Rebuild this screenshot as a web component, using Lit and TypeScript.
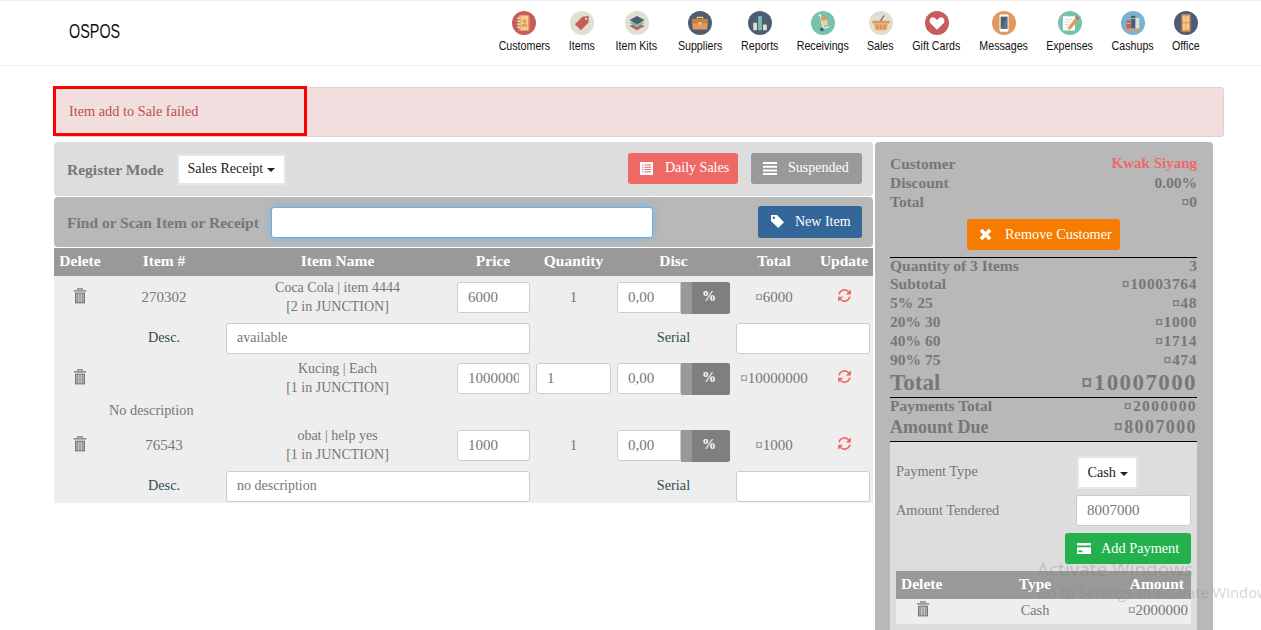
import { LitElement, css, html, svg } from "lit";
import { customElement } from "lit/decorators.js";

const navIcons: Record<string, unknown> = {
  customers: svg`<circle cx="32" cy="32" r="32" fill="#c75c5c"/><rect x="17" y="12" width="30" height="40" rx="3" fill="#e0995e"/><rect x="23" y="12" width="20" height="40" fill="#f5cf87"/><circle cx="33" cy="27" r="5" fill="#e0995e"/><path d="M25 42c0-7 4-9 8-9s8 2 8 9z" fill="#e0995e"/><path d="M13 19h8M13 27h8M13 35h8M13 43h8" stroke="#fff" stroke-width="2.5"/>`,
  items: svg`<circle cx="32" cy="32" r="32" fill="#e0e0d1"/><path d="M13 35 33 15l17-2-1 18-20 20z" fill="#c75c5c"/><circle cx="43" cy="21" r="3" fill="#e0e0d1"/>`,
  kits: svg`<circle cx="32" cy="32" r="32" fill="#e0e0d1"/><path d="M12 40 32 30l20 10-20 11z" fill="#c75c5c"/><path d="M12 32 32 22l20 10-20 11z" fill="#76c2af"/><path d="M12 24 32 13l20 11-20 11z" fill="#4f5d73"/>`,
  suppliers: svg`<circle cx="32" cy="32" r="32" fill="#4f5d73"/><path d="M25 22v-5h14v5" fill="none" stroke="#f5cf87" stroke-width="3"/><rect x="12" y="21" width="40" height="28" rx="3" fill="#e0995e"/><rect x="12" y="21" width="40" height="12" fill="#c9803f"/><rect x="28" y="30" width="8" height="6" fill="#f5cf87"/>`,
  reports: svg`<circle cx="32" cy="32" r="32" fill="#4f5d73"/><rect x="14" y="31" width="10" height="20" rx="1" fill="#e0e0d1"/><rect x="27" y="13" width="10" height="38" rx="1" fill="#76c2af"/><rect x="40" y="36" width="10" height="15" rx="1" fill="#e0e0d1"/>`,
  receivings: svg`<circle cx="32" cy="32" r="32" fill="#76c2af"/><path d="M20 11h5l8 35" fill="none" stroke="#fff" stroke-width="3"/><rect x="30" y="25" width="14" height="14" fill="#f5cf87" transform="rotate(-14 37 32)"/><rect x="27" y="13" width="12" height="12" fill="#e0995e" transform="rotate(-14 33 19)"/><path d="M33 46l16-4" stroke="#fff" stroke-width="3"/><circle cx="29" cy="49" r="5" fill="#4f5d73"/>`,
  sales: svg`<circle cx="32" cy="32" r="32" fill="#e0e0d1"/><path d="M30 28 40 12" stroke="#4f5d73" stroke-width="3.5"/><rect x="9" y="26" width="46" height="7" rx="1" fill="#e0995e"/><path d="M13 33h38l-4 18H17z" fill="#e8a86f"/><path d="M22 37v10M32 37v10M42 37v10" stroke="#c9803f" stroke-width="3"/>`,
  gift: svg`<circle cx="32" cy="32" r="32" fill="#c75c5c"/><path d="M32 50 15 33c-8-9 3-22 12-14l5 5 5-5c9-8 20 5 12 14z" fill="#fff"/>`,
  messages: svg`<circle cx="32" cy="32" r="32" fill="#e0995e"/><rect x="20" y="9" width="24" height="46" rx="3" fill="#fff"/><rect x="23" y="15" width="18" height="32" fill="#4f5d73"/><path d="M23 47 41 15v32z" fill="#5f6f87"/>`,
  expenses: svg`<circle cx="32" cy="32" r="32" fill="#76c2af"/><rect x="13" y="14" width="32" height="38" fill="#fff"/><path d="M18 22h22M18 29h16M18 36h10M18 43h10" stroke="#c5c5b5" stroke-width="2"/><path d="M28 42 47 17l7 6-19 24-9 3z" fill="#e0995e"/><path d="M47 17l3-4 7 6-3 4z" fill="#c75c5c"/>`,
  cashups: svg`<circle cx="32" cy="32" r="32" fill="#77b3d4"/><rect x="15" y="25" width="11" height="22" fill="#c75c5c"/><rect x="27" y="13" width="11" height="34" fill="#4f5d73"/><rect x="39" y="19" width="10" height="28" fill="#e0e0d1"/><path d="M15 33h11M27 20h11" stroke="#f5cf87" stroke-width="2"/><rect x="9" y="47" width="46" height="5" fill="#e0995e"/>`,
  office: svg`<circle cx="32" cy="32" r="32" fill="#4f5d73"/><rect x="20" y="9" width="24" height="46" fill="#e0995e"/><rect x="24" y="14" width="7" height="15" fill="#f5cf87"/><rect x="33" y="14" width="7" height="15" fill="#f5cf87"/><rect x="24" y="33" width="7" height="17" fill="#f5cf87"/><rect x="33" y="33" width="7" height="17" fill="#f5cf87"/>`,
};

const navItems = [
  { label: "Customers", icon: "customers", width: 50 },
  { label: "Items", icon: "items", width: 26 },
  { label: "Item Kits", icon: "kits", width: 43 },
  { label: "Suppliers", icon: "suppliers", width: 44 },
  { label: "Reports", icon: "reports", width: 36 },
  { label: "Receivings", icon: "receivings", width: 50 },
  { label: "Sales", icon: "sales", width: 25 },
  { label: "Gift Cards", icon: "gift", width: 47 },
  { label: "Messages", icon: "messages", width: 47 },
  { label: "Expenses", icon: "expenses", width: 45 },
  { label: "Cashups", icon: "cashups", width: 41 },
  { label: "Office", icon: "office", width: 26 },
];

const trash = html`<svg class="trash" viewBox="0 0 14 16" width="14" height="16">
  <path d="M4.8 1.8V.8h4.4v1M.8 2.8h12.4" stroke="currentColor" stroke-width="1.3" fill="none"/>
  <path d="M2 4.6h10V15.4H2z" fill="currentColor"/>
  <path d="M3.9 5.6v8.8M5.6 5.6v8.8M7 5.6v8.8M8.4 5.6v8.8M10.1 5.6v8.8" stroke="#eee" stroke-width=".7"/>
</svg>`;

const refresh = html`<svg viewBox="0 0 16 16" width="15" height="15">
  <path d="M2.2 6.8A5.9 5.9 0 0 1 12.7 4.4M13.8 9.2A5.9 5.9 0 0 1 3.3 11.6" fill="none" stroke="#ee6966" stroke-width="1.7"/>
  <path d="M14.8 1.4v5.4H9.4zM1.2 14.6V9.2h5.4z" fill="#ee6966"/>
</svg>`;

const listIcon = html`<svg viewBox="0 0 13 13" width="13" height="13">
  <path d="M0 0h13v13H0z" fill="#fff"/>
  <path d="M2 3h1.4M4.4 3H11M2 5.3h1.4M4.4 5.3H11M2 7.6h1.4M4.4 7.6H11M2 9.9h1.4M4.4 9.9H11" stroke="#ee6966" stroke-width="1"/>
</svg>`;

const barsIcon = html`<svg viewBox="0 0 14 13" width="14" height="13">
  <path d="M0 1h14M0 4.7h14M0 8.4h14M0 12h14" stroke="#fff" stroke-width="2"/>
</svg>`;

const tagIcon = html`<svg viewBox="0 0 15 15" width="15" height="15">
  <path fill-rule="evenodd" d="M1 1h6l7 7.2L8.2 14 1 7zM3.8 2.6a1.2 1.2 0 1 0 .01 0z" fill="#fff"/>
</svg>`;

const crossIcon = html`<svg viewBox="0 0 12 12" width="13" height="13">
  <path d="M1.8 1.8l8.4 8.4M10.2 1.8l-8.4 8.4" stroke="#fff" stroke-width="3.4"/>
</svg>`;

const cardIcon = html`<svg viewBox="0 0 14 11" width="14" height="11">
  <path d="M0 0h14v2.6H0zM0 4.2h14V11H0z" fill="#fff"/>
  <path d="M1.4 7.4h4v1.8h-4z" fill="#22b14c"/>
</svg>`;

interface SaleRow {
  number: string;
  name: string;
  stock: string;
  price: string;
  quantity: string;
  quantityEditable: boolean;
  total: string;
  description: string | null;
}

const rows: SaleRow[] = [
  { number: "270302", name: "Coca Cola | item 4444", stock: "[2 in JUNCTION]", price: "6000", quantity: "1", quantityEditable: false, total: "¤6000", description: "available" },
  { number: "", name: "Kucing | Each", stock: "[1 in JUNCTION]", price: "10000000", quantity: "1", quantityEditable: true, total: "¤10000000", description: null },
  { number: "76543", name: "obat | help yes", stock: "[1 in JUNCTION]", price: "1000", quantity: "1", quantityEditable: false, total: "¤1000", description: "no description" },
];

const taxes = [
  ["Subtotal", "¤10003764"],
  ["5% 25", "¤48"],
  ["20% 30", "¤1000"],
  ["40% 60", "¤1714"],
  ["90% 75", "¤474"],
];

@customElement("app-root")
export class AppRoot extends LitElement {
  renderRow(row: SaleRow) {
    return html`
      <div class="row">
        <div class="icon-cell">${trash}</div>
        <div class="num">${row.number}</div>
        <div class="name">${row.name}<br />${row.stock}</div>
        <input class="field" .value=${row.price} />
        <div class="num">
          ${row.quantityEditable
            ? html`<input class="field qty" .value=${row.quantity} />`
            : row.quantity}
        </div>
        <div class="disc">
          <input class="field" value="0,00" />
          <span class="toggle"><b>%</b></span>
        </div>
        <div class="num">${row.total}</div>
        <div class="icon-cell">${refresh}</div>
      </div>
      ${row.description === null
        ? html`<div class="row no-desc"><span>No description</span></div>`
        : html`<div class="row desc">
            <div></div>
            <div class="dark">Desc.</div>
            <input class="field wide" .value=${row.description} />
            <div class="dark serial">Serial</div>
            <input class="field serial-input" />
          </div>`}
    `;
  }

  render() {
    return html`
      <header>
        <div class="brand">OSPOS</div>
        <nav>
          ${navItems.map(
            (item) => html`<a style="width:${item.width}px">
              <svg viewBox="0 0 64 64" width="24" height="24">${navIcons[item.icon]}</svg>
              <span>${item.label}</span>
            </a>`
          )}
        </nav>
      </header>

      <div class="alert">
        <span>Item add to Sale failed</span>
        <div class="highlight"></div>
      </div>

      <main>
        <section class="register">
          <div class="bar mode">
            <label>Register Mode</label>
            <button class="select mode-select">Sales Receipt <i class="caret"></i></button>
            <div class="actions">
              <button class="btn daily">${listIcon}<span>Daily Sales</span></button>
              <button class="btn suspended">${barsIcon}<span>Suspended</span></button>
            </div>
          </div>
          <div class="bar find">
            <label>Find or Scan Item or Receipt</label>
            <input class="search" />
            <button class="btn new-item">${tagIcon}<span>New Item</span></button>
          </div>
          <div class="row thead">
            <div>Delete</div>
            <div>Item #</div>
            <div>Item Name</div>
            <div>Price</div>
            <div>Quantity</div>
            <div>Disc</div>
            <div>Total</div>
            <div>Update</div>
          </div>
          <div class="tbody">${rows.map((row) => this.renderRow(row))}</div>
        </section>

        <aside>
          <div class="line h19"><span>Customer</span><span class="customer">Kwak Siyang</span></div>
          <div class="line h19"><span>Discount</span><span>0.00%</span></div>
          <div class="line h19"><span>Total</span><span>¤0</span></div>
          <button class="btn remove">${crossIcon}<span>Remove Customer</span></button>
          <hr class="first" />
          <div class="line h17"><span>Quantity of 3 Items</span><span>3</span></div>
          ${taxes.map(
            ([name, value]) => html`<div class="line h19"><span>${name}</span><span class="value">${value}</span></div>`
          )}
          <div class="line grand"><span>Total</span><span class="value">¤10007000</span></div>
          <hr />
          <div class="line h18"><span>Payments Total</span><span class="value wide-value">¤2000000</span></div>
          <div class="line due"><span>Amount Due</span><span class="value wide-value">¤8007000</span></div>
          <hr />
          <div class="payment">
            <div class="pay-row type">
              <span>Payment Type</span>
              <button class="select cash">Cash <i class="caret"></i></button>
            </div>
            <div class="pay-row">
              <span>Amount Tendered</span>
              <input class="field tendered" value="8007000" />
            </div>
            <button class="btn add">${cardIcon}<span>Add Payment</span></button>
            <div class="pay-table pay-head">
              <div class="left">Delete</div>
              <div>Type</div>
              <div class="right">Amount</div>
            </div>
            <div class="pay-table pay-body">
              <div class="trash-cell">${trash}</div>
              <div>Cash</div>
              <div class="right num">¤2000000</div>
            </div>
          </div>
        </aside>
      </main>

      <div class="watermark">
        <div class="wm-title">Activate Windows</div>
        <div class="wm-sub">Go to Settings to activate Windows.</div>
      </div>
    `;
  }

  static styles = css`
    :host {
      display: block;
      position: relative;
      height: 630px;
      overflow: hidden;
      background: #fff;
      font-family: "Liberation Serif", serif;
      font-size: 14.3px;
      color: #777;
    }
    * {
      box-sizing: border-box;
    }
    button,
    input {
      font: inherit;
      margin: 0;
    }
    header {
      height: 66px;
      display: flex;
      align-items: flex-start;
      justify-content: space-between;
      padding: 0 62px 0 69px;
      border-top: 1px solid #eee;
      border-bottom: 1px solid #eee;
    }
    .brand {
      margin-top: 19px;
      font-family: "Liberation Sans", sans-serif;
      font-size: 20px;
      line-height: 22px;
      color: #111;
      transform: scaleX(0.72);
      transform-origin: left center;
    }
    nav {
      display: flex;
      gap: 20px;
      padding-top: 10px;
    }
    nav a {
      display: flex;
      flex-direction: column;
      align-items: center;
      color: #111;
      font-family: "Liberation Sans", sans-serif;
      font-size: 13px;
      line-height: 14px;
      white-space: nowrap;
    }
    nav a span {
      display: block;
      transform: scaleX(0.82);
    }
    nav svg {
      flex: none;
      margin-bottom: 4px;
    }
    .alert {
      position: relative;
      width: 1170px;
      height: 50px;
      margin: 21px 0 5px 54px;
      padding: 0 0 2px 14px;
      display: flex;
      align-items: center;
      border: 1px solid #ebccd1;
      border-radius: 3px;
      background: #f2dede;
      color: #b9504e;
    }
    .highlight {
      position: absolute;
      left: -2px;
      top: -2px;
      width: 254px;
      height: 50px;
      border: 3px solid #f00;
    }
    main {
      display: flex;
      align-items: flex-start;
      gap: 2px;
      margin-left: 54px;
    }
    .register {
      width: 819px;
    }
    .bar {
      display: flex;
      align-items: center;
      padding: 0 11px 0 13px;
      border-radius: 4px;
      margin-bottom: 1px;
    }
    .bar label {
      font-weight: bold;
      font-size: 15.5px;
      color: #777;
      padding-top: 2px;
    }
    .mode {
      height: 54px;
      background: #ddd;
    }
    .find {
      height: 50px;
      background: #b8b8b8;
    }
    .select {
      height: 31px;
      background: #fff;
      border: 2px solid #dce8f2;
      color: #222;
      cursor: pointer;
      padding: 0;
    }
    .mode-select {
      width: 109px;
      margin-left: 13px;
      font-size: 14px;
    }
    .caret {
      display: inline-block;
      border-top: 4px solid #222;
      border-left: 4px solid transparent;
      border-right: 4px solid transparent;
      vertical-align: middle;
    }
    .actions {
      display: flex;
      gap: 13px;
      margin: -1px 0 0 auto;
    }
    .btn {
      display: flex;
      align-items: center;
      height: 31px;
      border: 0;
      border-radius: 3px;
      color: #fff;
      padding: 0 0 1px 12px;
      white-space: nowrap;
      font-size: 14px;
    }
    .daily {
      width: 110px;
      background: #ee6966;
    }
    .daily span {
      margin-left: 12px;
    }
    .suspended {
      width: 111px;
      background: #999;
    }
    .suspended span {
      margin-left: 11px;
    }
    .search {
      width: 382px;
      height: 31px;
      margin-left: 12px;
      border: 1px solid #66afe9;
      border-radius: 3px;
      box-shadow: 0 0 8px rgba(102, 175, 233, 0.6);
      outline: none;
    }
    .new-item {
      width: 104px;
      height: 32px;
      margin-left: auto;
      background: #336699;
    }
    .new-item span {
      margin-left: 10px;
    }
    .row {
      display: grid;
      grid-template-columns: 52px 116px 231px 80px 81px 119px 82px 58px;
      align-items: center;
      text-align: center;
    }
    .thead {
      height: 28px;
      padding-bottom: 2px;
      background: #999;
      color: #fff;
      font-weight: bold;
      font-size: 15.5px;
    }
    .tbody {
      height: 227px;
      overflow: hidden;
      background: #eee;
    }
    .tbody .row {
      height: 43px;
    }
    .tbody .row.desc {
      height: 38px;
    }
    .tbody .row.no-desc {
      height: 24px;
      display: block;
      padding: 1px 0 0 55px;
      text-align: left;
      line-height: 18px;
    }
    .name {
      font-size: 14px;
      line-height: 19px;
      padding-bottom: 2px;
    }
    .num {
      font-size: 15px;
    }
    .icon-cell {
      display: flex;
      justify-content: center;
      margin-top: -4px;
    }
    .trash {
      color: #777;
      display: block;
    }
    .field {
      height: 31px;
      border: 1px solid #ccc;
      border-radius: 3px;
      background: #fff;
      color: #777;
      padding: 0 10px;
      outline: none;
      width: 100%;
      min-width: 0;
      font-size: 15px;
    }
    .row > .field {
      width: 73px;
      margin-left: 4px;
    }
    .qty {
      width: 75px;
    }
    .desc .wide {
      width: 304px;
      margin-left: 4px;
      grid-column: 3 / 5;
      font-size: 14px;
    }
    .desc .serial {
      grid-column: 5 / 7;
      padding-left: 81px;
    }
    .desc .serial-input {
      grid-column: 7 / 9;
      width: 134px;
      margin-left: 3px;
    }
    .dark {
      color: #2f4f4f;
      padding-bottom: 2px;
    }
    .disc {
      display: flex;
      height: 32px;
      width: 113px;
      margin-left: 3px;
      border-radius: 3px;
      overflow: hidden;
      text-align: center;
    }
    .disc .field {
      width: 64px;
      flex: none;
      height: 31px;
      border-radius: 3px 0 0 3px;
    }
    .toggle {
      flex: 1;
      background: #999;
      padding-left: 11px;
      display: flex;
    }
    .toggle b {
      flex: 1;
      background: #7f7f7f;
      color: #fff;
      line-height: 30px;
      font-size: 14px;
      padding-right: 4px;
    }
    aside {
      width: 338px;
      height: 488px;
      padding: 13px 16px 0 15px;
      background: #b8b8b8;
      border-radius: 4px 4px 0 0;
      color: #777;
      font-weight: bold;
      font-size: 15.5px;
    }
    .line {
      display: flex;
      justify-content: space-between;
      align-items: center;
      padding-bottom: 2px;
    }
    .value {
      letter-spacing: 0.6px;
    }
    .wide-value {
      letter-spacing: 1.4px;
    }
    .h19 {
      height: 19px;
    }
    .h18 {
      height: 18px;
    }
    .h17 {
      height: 17px;
    }
    .customer {
      color: #ee6966;
      font-size: 15px;
    }
    .grand {
      height: 27px;
      font-size: 23px;
    }
    .grand .value {
      letter-spacing: 1.4px;
    }
    .due {
      height: 25px;
      font-size: 18px;
      padding-bottom: 3px;
    }
    hr {
      height: 1px;
      border: 0;
      margin: 0;
      background: #000;
    }
    hr.first {
      margin-top: 7px;
    }
    .remove {
      width: 153px;
      margin: 7px auto 0;
      background: #f57c00;
      font-weight: normal;
      font-size: 14.3px;
    }
    .remove span {
      margin-left: 13px;
    }
    .payment {
      background: #ddd;
      padding: 14px 6px 30px;
      font-weight: normal;
      font-size: 14.3px;
    }
    .pay-row {
      display: grid;
      grid-template-columns: 180px 115px;
      align-items: center;
    }
    .pay-row.type {
      height: 33px;
      margin-bottom: 6px;
    }
    .pay-row.type span {
      padding-bottom: 2px;
    }
    .cash {
      width: 61px;
      height: 33px;
      margin-left: 1px;
    }
    .add {
      width: 126px;
      margin: 7px 0 7px auto;
      background: #22b14c;
      font-weight: normal;
      font-size: 14.3px;
    }
    .add span {
      margin-left: 10px;
    }
    .pay-table {
      display: grid;
      grid-template-columns: 88px 102px 105px;
      align-items: center;
      text-align: center;
    }
    .pay-head {
      height: 28px;
      padding-bottom: 2px;
      background: #999;
      color: #fff;
      font-weight: bold;
      font-size: 15.5px;
    }
    .pay-body {
      height: 25px;
      padding-bottom: 2px;
      background: #eee;
    }
    .left {
      text-align: left;
      padding-left: 5px;
    }
    .right {
      text-align: right;
      padding-right: 7px;
    }
    .pay-body .right {
      padding-right: 3px;
    }
    .trash-cell {
      display: flex;
      padding-left: 20px;
      margin-top: -4px;
    }
    .watermark {
      position: absolute;
      left: 1037px;
      top: 557px;
      white-space: nowrap;
      font-family: "Open Sans", sans-serif;
      color: rgba(130, 130, 130, 0.35);
      pointer-events: none;
    }
    .wm-title {
      font-size: 19px;
      line-height: 24px;
    }
    .wm-sub {
      font-size: 14.8px;
      line-height: 22px;
    }
  `;
}

declare global {
  interface HTMLElementTagNameMap {
    "app-root": AppRoot;
  }
}
